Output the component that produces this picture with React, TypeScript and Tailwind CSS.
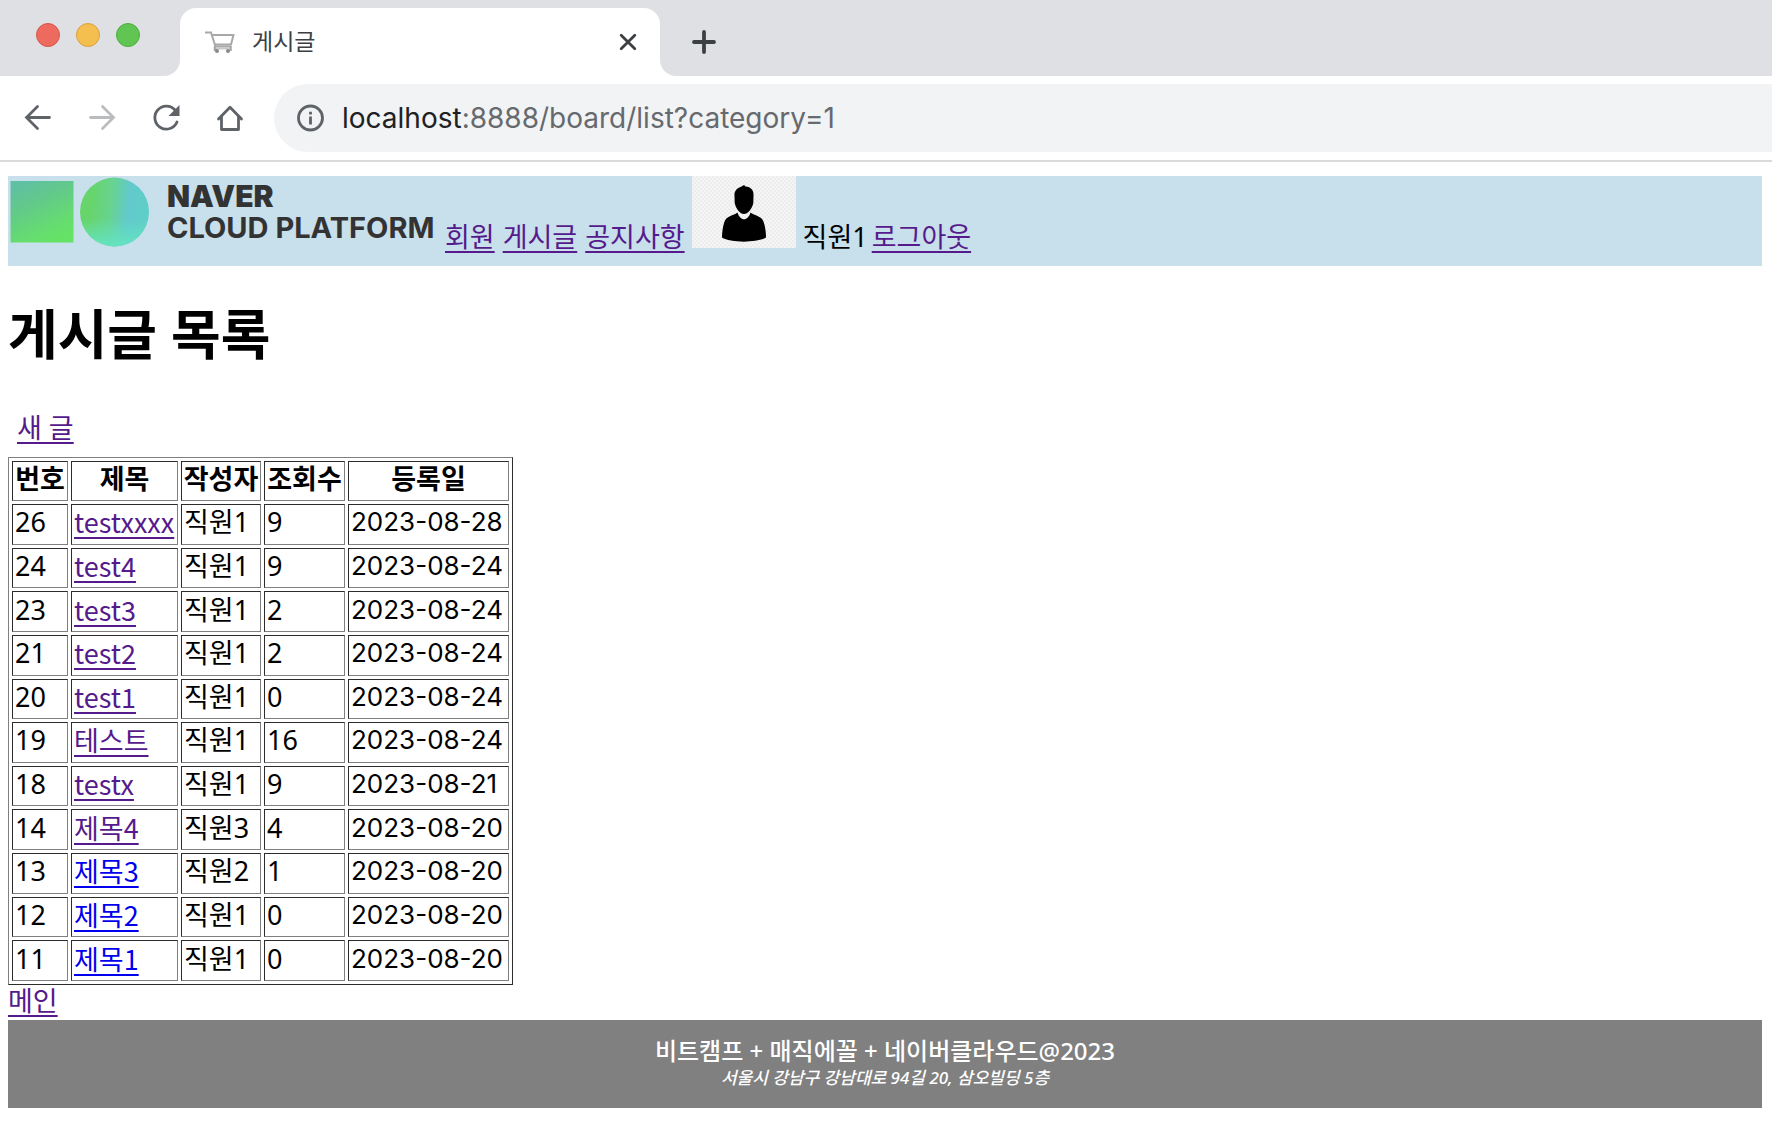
import type { ReactNode } from 'react';

type Post = {
  no: number;
  title: string;
  writer: string;
  views: number;
  date: string;
  visited: boolean;
};

const posts: Post[] = [
  { no: 26, title: 'testxxxx', writer: '직원1', views: 9, date: '2023-08-28', visited: true },
  { no: 24, title: 'test4', writer: '직원1', views: 9, date: '2023-08-24', visited: true },
  { no: 23, title: 'test3', writer: '직원1', views: 2, date: '2023-08-24', visited: true },
  { no: 21, title: 'test2', writer: '직원1', views: 2, date: '2023-08-24', visited: true },
  { no: 20, title: 'test1', writer: '직원1', views: 0, date: '2023-08-24', visited: true },
  { no: 19, title: '테스트', writer: '직원1', views: 16, date: '2023-08-24', visited: true },
  { no: 18, title: 'testx', writer: '직원1', views: 9, date: '2023-08-21', visited: true },
  { no: 14, title: '제목4', writer: '직원3', views: 4, date: '2023-08-20', visited: true },
  { no: 13, title: '제목3', writer: '직원2', views: 1, date: '2023-08-20', visited: false },
  { no: 12, title: '제목2', writer: '직원1', views: 0, date: '2023-08-20', visited: false },
  { no: 11, title: '제목1', writer: '직원1', views: 0, date: '2023-08-20', visited: false },
];

const columns = [
  { label: '번호', width: 'w-[56px]' },
  { label: '제목', width: 'w-[107px]' },
  { label: '작성자', width: 'w-[80px]' },
  { label: '조회수', width: 'w-[81px]' },
  { label: '등록일', width: 'w-[161px]' },
];

const cell =
  'border border-t-[#2c2c2c] border-l-[#2c2c2c] border-r-[#808080] border-b-[#808080] pb-1 leading-[34px] whitespace-nowrap';

const PageLink = ({ children, visited = true }: { children: ReactNode; visited?: boolean }) => (
  <a
    href="#"
    className={`underline decoration-2 underline-offset-4 ${visited ? 'text-[#551a8b]' : 'text-[#0000ee]'}`}
  >
    {children}
  </a>
);

const CartIcon = () => (
  <svg className="h-6 w-8" viewBox="0 0 32 24" fill="none" stroke="#a8a8a8" strokeWidth="2">
    <path d="M1 2.500h6l4.500 14H27" />
    <path d="M8 5h21.500l-2.500 9.500H11" />
    <path d="M11 16v5M26.500 16v5" strokeWidth="2.500" />
    <path d="M12 18.500h14" stroke="#c8c8c8" />
    <circle cx="13" cy="21" r="2" fill="#8a8a8a" stroke="none" />
    <circle cx="24" cy="21" r="2" fill="#8a8a8a" stroke="none" />
  </svg>
);

const BrowserBar = () => (
  <div className="border-b-2 border-[#dadada] font-['Inter','Noto_Sans_CJK_KR',sans-serif]">
    <div className="flex h-[76px] items-end bg-[#dee0e4]">
      <div className="flex h-[76px] w-[164px] items-start gap-4 pt-[23px] pl-9">
        <span className="size-6 rounded-full border border-[#d85549] bg-[#ed6a5e]" />
        <span className="size-6 rounded-full border border-[#d9a23c] bg-[#f5bf4f]" />
        <span className="size-6 rounded-full border border-[#4fae3c] bg-[#61c554]" />
      </div>
      <svg className="size-4" viewBox="0 0 16 16">
        <path d="M16 0v16H0A16 16 0 0 0 16 0z" fill="#fff" />
      </svg>
      <div className="flex h-[68px] w-[480px] items-center rounded-t-2xl bg-white pr-[23px] pl-6">
        <CartIcon />
        <span className="ml-4 flex-1 text-[23px] text-[#3c4043]">게시글</span>
        <button aria-label="탭 닫기" className="text-[#3c4043]">
          <svg className="size-[18px]" viewBox="0 0 18 18" fill="none" stroke="currentColor" strokeWidth="2.800" strokeLinecap="round">
            <path d="M2.200 2.200l13.600 13.600M15.800 2.200L2.200 15.800" />
          </svg>
        </button>
      </div>
      <svg className="size-4" viewBox="0 0 16 16">
        <path d="M0 0v16h16A16 16 0 0 1 0 0z" fill="#fff" />
      </svg>
      <button aria-label="새 탭" className="flex h-[68px] items-center pl-4 text-[#3c4043]">
        <svg className="size-6" viewBox="0 0 24 24" fill="none" stroke="currentColor" strokeWidth="3.800" strokeLinecap="round">
          <path d="M12 2v20M2 12h20" />
        </svg>
      </button>
    </div>

    <div className="flex items-center bg-white py-2">
      <div className="flex w-[274px] items-center gap-8 pl-[22px]">
        <button aria-label="뒤로" className="text-[#5f6368]">
          <svg className="size-8" viewBox="0 0 32 32" fill="none" stroke="currentColor" strokeWidth="2.800" strokeLinecap="round">
            <path d="M27.500 15.500H4.500M15.500 4.500l-11 11 11 11" />
          </svg>
        </button>
        <button aria-label="앞으로" className="text-[#babcbe]">
          <svg className="size-8" viewBox="0 0 32 32" fill="none" stroke="currentColor" strokeWidth="2.800" strokeLinecap="round">
            <path d="M4.500 15.500h23M16.500 4.500l11 11-11 11" />
          </svg>
        </button>
        <button aria-label="새로고침" className="text-[#5f6368]">
          <svg className="size-8" viewBox="0 0 32 32" fill="none" stroke="currentColor" strokeWidth="2.800" strokeLinecap="round">
            <path d="M27 20A11.500 11.500 0 1 1 25 8" />
            <path d="M29.500 3v11H18.500z" fill="currentColor" stroke="none" />
          </svg>
        </button>
        <button aria-label="홈" className="text-[#5f6368]">
          <svg className="size-8" viewBox="0 0 32 32" fill="none" stroke="currentColor" strokeWidth="2.800" strokeLinecap="round" strokeLinejoin="round">
            <path d="M4.500 17L16 5.200 27.500 17" />
            <path d="M7.500 14.500V27.500h17V14.500" />
          </svg>
        </button>
      </div>
      <div className="flex h-[68px] flex-1 items-center gap-4 rounded-l-full bg-[#f1f3f4] pl-[22px]">
        <svg className="size-[30px]" viewBox="0 0 30 30" fill="none" stroke="#5f6368" strokeWidth="2.800">
          <circle cx="14.500" cy="15" r="12" />
          <path d="M14.500 13.500v8M14.500 8.700v2.800" />
        </svg>
        <div role="textbox" aria-label="주소" className="text-[28px] text-[#66696d]">
          <span className="text-[#202124]">localhost</span>:8888/board/list?category=1
        </div>
      </div>
    </div>
  </div>
);

const Logo = () => (
  <div className="flex h-[72px] w-[430px] gap-[15px]">
    <svg className="h-[72px] w-[144px]" viewBox="0 0 144 72">
      <defs>
        <linearGradient id="square" x1="0.200" y1="0" x2="0.700" y2="1">
          <stop offset="0" stopColor="#5fc0a4" />
          <stop offset="0.350" stopColor="#62c98a" />
          <stop offset="0.800" stopColor="#66de6e" />
          <stop offset="1" stopColor="#65e366" />
        </linearGradient>
        <linearGradient id="circle" x1="0" y1="0.400" x2="1" y2="0.500">
          <stop offset="0.150" stopColor="#67d56b" />
          <stop offset="0.450" stopColor="#67d391" />
          <stop offset="0.700" stopColor="#62c9cd" />
          <stop offset="1" stopColor="#5fcfc6" />
        </linearGradient>
        <linearGradient id="glow" x1="0" y1="0" x2="0" y2="1">
          <stop offset="0.600" stopColor="#64e4c0" stopOpacity="0" />
          <stop offset="1" stopColor="#64e4c0" />
        </linearGradient>
      </defs>
      <rect x="2.500" y="5" width="63" height="61.500" fill="url(#square)" />
      <circle cx="106.500" cy="36" r="34.500" fill="url(#circle)" />
      <circle cx="106.500" cy="36" r="34.500" fill="url(#glow)" />
    </svg>
    <div className="flex flex-col pt-1 font-['Inter','Noto_Sans_CJK_KR',sans-serif] leading-8 whitespace-nowrap text-[#333]">
      <span className="text-[30px] font-black">NAVER</span>
      <span className="text-[29px] font-bold">CLOUD PLATFORM</span>
    </div>
  </div>
);

const Avatar = () => (
  <svg className="h-[72px] w-[104px]" viewBox="0 0 104 72">
    <defs>
      <pattern id="checker" width="4" height="4" patternUnits="userSpaceOnUse">
        <rect width="4" height="4" fill="#f5f5f5" />
        <path d="M0 0h2v2H0zM2 2h2v2H2z" fill="#ececec" />
      </pattern>
    </defs>
    <rect width="104" height="72" fill="url(#checker)" />
    <path d="M52 9l1.500 1.500C59 11 62 14 61.500 20l-.2 7C60 33 56 38 52 38s-8-5-9.300-11l-.2-7c-.5-5 2.500-8 7-9.500z" />
    <path d="M45.500 36.500c2.500 9 10.500 9 13 0 2 2.500 10 3 12.500 8 2 4 3 12 3 17-8 5.500-36 5.500-44 0 0-5 1-13 3-17 2.500-5 10.500-5.500 12.500-8z" />
  </svg>
);

const App = () => {
  return (
    <div className="min-h-screen bg-white font-['Noto_Sans','Noto_Sans_CJK_KR',sans-serif] text-[27px] leading-9 text-black">
      <BrowserBar />

      <div className="pt-[14px] pr-[10px] pl-2">
        <header className="flex h-[90px] items-start gap-[7px] bg-[#c8dfec]">
          <Logo />
          <nav className="flex gap-2 pt-[43px]">
            <PageLink>회원</PageLink>
            <PageLink>게시글</PageLink>
            <PageLink>공지사항</PageLink>
          </nav>
          <Avatar />
          <div className="flex gap-1 pt-[43px]">
            <span>직원1</span>
            <PageLink>로그아웃</PageLink>
          </div>
        </header>

        <h1 className="pt-[30px] text-[54px] leading-[76px] font-bold">게시글 목록</h1>

        <div className="px-[9px] pt-[38px] pb-[11px]">
          <PageLink>새 글</PageLink>
        </div>

        <table className="h-[528px] w-[505px] table-fixed border-separate border-spacing-[3px] border border-t-[#808080] border-r-[#2c2c2c] border-b-[#2c2c2c] border-l-[#808080]">
          <colgroup>
            {columns.map((column) => (
              <col key={column.label} className={column.width} />
            ))}
          </colgroup>
          <thead>
            <tr>
              {columns.map((column) => (
                <th key={column.label} className={`${cell} font-bold`}>
                  {column.label}
                </th>
              ))}
            </tr>
          </thead>
          <tbody>
            {posts.map((post) => (
              <tr key={post.no}>
                <td className={`${cell} px-[2px]`}>{post.no}</td>
                <td className={`${cell} px-[2px] font-['Noto_Sans_CJK_KR',sans-serif]`}>
                  <PageLink visited={post.visited}>{post.title}</PageLink>
                </td>
                <td className={`${cell} px-[2px]`}>{post.writer}</td>
                <td className={`${cell} px-[2px]`}>{post.views}</td>
                <td className={`${cell} px-[2px] font-['Inter',sans-serif] text-[26px]`}>{post.date}</td>
              </tr>
            ))}
          </tbody>
        </table>

        <div className="pb-1 leading-[31px]">
          <PageLink>메인</PageLink>
        </div>

        <footer className="flex h-[88px] flex-col items-center bg-[#808080] pt-4 text-white">
          <p className="text-[24px] leading-[30px] font-medium">비트캠프 + 매직에꼴 + 네이버클라우드@2023</p>
          <address className="text-[17px] leading-6 font-medium italic">
            서울시 강남구 강남대로 94길 20, 삼오빌딩 5층
          </address>
        </footer>
      </div>
    </div>
  );
};

export default App;
